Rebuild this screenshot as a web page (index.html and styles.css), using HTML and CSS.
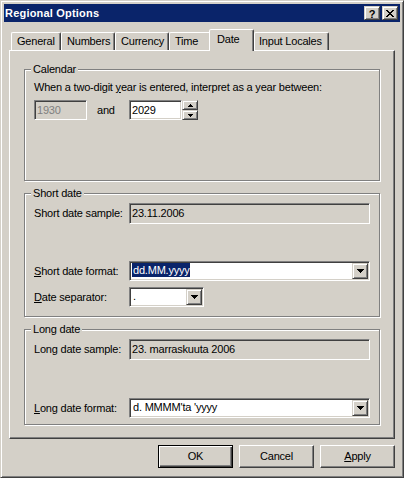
FILE: index.html
```html
<!DOCTYPE html>
<html>
<head>
<meta charset="utf-8">
<title>Regional Options</title>
<link rel="stylesheet" href="styles.css">
</head>
<body>
<div class="window">
  <div class="titlebar">
    <span class="title">Regional Options</span>
    <div class="tbtns">
      <span class="tbtn help">?</span>
      <span class="tbtn close"><svg width="8" height="7" viewBox="0 0 8 7" shape-rendering="crispEdges"><path d="M0 0h2v1H0z M6 0h2v1H6z M1 1h2v1H1z M5 1h2v1H5z M2 2h4v1H2z M3 3h2v1H3z M2 4h4v1H2z M1 5h2v1H1z M5 5h2v1H5z M0 6h2v1H0z M6 6h2v1H6z" fill="#000"/></svg></span>
    </div>
  </div>

  <div class="tabctl">
    <div class="tabs">
      <div class="tab t-general">General</div>
      <div class="tab t-numbers">Numbers</div>
      <div class="tab t-currency">Currency</div>
      <div class="tab t-time">Time</div>
      <div class="tab sel t-date">Date</div>
      <div class="tab t-input">Input Locales</div>
    </div>
    <div class="panel">
      <div class="group g-cal">
        <span class="gtitle">Calendar</span>
        <div class="line">When a two-digit <u>y</u>ear is entered, interpret as a year between:</div>
        <div class="row yr">
          <div class="field edit disabled w-yr">1930</div>
          <span class="and">and</span>
          <div class="field edit w-yr">2029</div>
          <div class="spin">
            <span class="sbtn"><svg width="5" height="3" viewBox="0 0 5 3" shape-rendering="crispEdges"><path d="M2 0h1v1H2z M1 1h3v1H1z M0 2h5v1H0z" fill="#000"/></svg></span>
            <span class="sbtn"><svg width="5" height="3" viewBox="0 0 5 3" shape-rendering="crispEdges"><path d="M0 0h5v1H0z M1 1h3v1H1z M2 2h1v1H2z" fill="#000"/></svg></span>
          </div>
        </div>
      </div>

      <div class="group g-short">
        <span class="gtitle">Short date</span>
        <div class="row">
          <span class="lbl">Short date sample:</span>
          <div class="field sample">23.11.2006</div>
        </div>
        <div class="row r-fmt">
          <span class="lbl"><u>S</u>hort date format:</span>
          <div class="field combo w-wide">
            <span class="ctext"><span class="hl">dd.MM.yyyy</span></span>
            <span class="dd"><svg width="7" height="4" viewBox="0 0 7 4" shape-rendering="crispEdges"><path d="M0 0h7v1H0z M1 1h5v1H1z M2 2h3v1H2z M3 3h1v1H3z" fill="#000"/></svg></span>
          </div>
        </div>
        <div class="row r-sep">
          <span class="lbl"><u>D</u>ate separator:</span>
          <div class="field combo w-sep">
            <span class="ctext plain">.</span>
            <span class="dd"><svg width="7" height="4" viewBox="0 0 7 4" shape-rendering="crispEdges"><path d="M0 0h7v1H0z M1 1h5v1H1z M2 2h3v1H2z M3 3h1v1H3z" fill="#000"/></svg></span>
          </div>
        </div>
      </div>

      <div class="group g-long">
        <span class="gtitle">Long date</span>
        <div class="row">
          <span class="lbl">Long date sample:</span>
          <div class="field sample">23. marraskuuta 2006</div>
        </div>
        <div class="row r-lfmt">
          <span class="lbl"><u>L</u>ong date format:</span>
          <div class="field combo w-wide">
            <span class="ctext plain">d. MMMM'ta 'yyyy</span>
            <span class="dd"><svg width="7" height="4" viewBox="0 0 7 4" shape-rendering="crispEdges"><path d="M0 0h7v1H0z M1 1h5v1H1z M2 2h3v1H2z M3 3h1v1H3z" fill="#000"/></svg></span>
          </div>
        </div>
      </div>
    </div>
  </div>

  <div class="buttons">
    <div class="btn def">OK</div>
    <div class="btn">Cancel</div>
    <div class="btn"><span><u>A</u>pply</span></div>
  </div>
</div>
</body>
</html>
```

FILE: styles.css
```css
* { box-sizing: border-box; }
html, body { margin: 0; padding: 0; }
body {
  background: #d4d0c8;
  font-family: "Liberation Sans", Arial, sans-serif;
  font-size: 11px;
  letter-spacing: -0.2px;
  color: #000;
}
u { text-decoration-thickness: 1px; text-underline-offset: 1px; }

.window {
  width: 404px;
  height: 478px;
  border: 1px solid;
  border-color: #d4d0c8 #404040 #404040 #d4d0c8;
  box-shadow: inset 1px 1px #fff, inset -1px -1px #808080;
  padding: 3px;
  background: #d4d0c8;
  display: flex;
  flex-direction: column;
}

/* title bar */
.titlebar {
  height: 18px;
  background: #0a246a;
  display: flex;
  align-items: center;
  padding: 0 2px 0 1px;
}
.title {
  flex: 1;
  color: #fff;
  font-weight: bold;
  line-height: 18px;
  letter-spacing: 0.2px;
}
.tbtns { display: flex; gap: 2px; }
.tbtn {
  width: 16px;
  height: 14px;
  background: #d4d0c8;
  border: 1px solid;
  border-color: #d4d0c8 #404040 #404040 #d4d0c8;
  box-shadow: inset 1px 1px #fff, inset -1px -1px #808080;
  display: flex;
  align-items: center;
  justify-content: center;
}
.tbtn.help {
  font-weight: bold;
  font-size: 11px;
  line-height: 12px;
  letter-spacing: 0;
  padding-top: 1px;
}
.tbtn.close svg { display: block; margin-top: 0; }

/* tabs */
.tabctl { margin: 7px 0 0 5px; width: 386px; }
.tabs {
  height: 21px;
  display: flex;
  align-items: flex-end;
  padding-left: 2px;
}
.tab {
  height: 18px;
  border: 1px solid;
  border-bottom: 0;
  border-color: #fff #404040 transparent #fff;
  box-shadow: inset -1px 0 #808080;
  border-radius: 2px 2px 0 0;
  line-height: 16px;
  padding-left: 5px;
  white-space: nowrap;
}
.t-general { width: 50px; }
.t-numbers { width: 54px; }
.t-currency { width: 54px; }
.t-time { width: 40px; border-right: 0; box-shadow: none; border-radius: 2px 0 0 0; }
.t-date { width: 45px; padding-left: 7px; }
.t-input { width: 75px; padding-left: 4px; }
.tab.sel {
  height: 22px;
  margin-bottom: -1px;
  padding-top: 1px;
  position: relative;
  z-index: 1;
  background: #d4d0c8;
}

.panel {
  height: 389px;
  border: 1px solid;
  border-color: #fff #404040 #404040 #fff;
  box-shadow: inset -1px -1px #808080;
  padding-top: 18px;
}

/* group boxes */
.group {
  position: relative;
  width: 356px;
  margin-left: 14px;
  border: 1px solid #808080;
  box-shadow: inset 1px 1px #fff, 1px 1px #fff;
  padding-left: 9px;
}
.g-cal { height: 112px; padding-top: 11px; }
.g-short { height: 124px; padding-top: 9px; margin-top: 12px; }
.g-long { height: 96px; padding-top: 9px; margin-top: 12px; }
.gtitle {
  position: absolute;
  top: -7px;
  left: 6px;
  padding: 0 2px;
  line-height: 13px;
  background: #d4d0c8;
}
.line { line-height: 13px; white-space: nowrap; }

.row { display: flex; align-items: center; }
.yr { margin-top: 6px; }
.r-fmt { margin-top: 37px; }
.r-sep { margin-top: 6px; }
.r-lfmt { margin-top: 38px; }
.lbl { width: 95px; line-height: 13px; white-space: nowrap; }
.and { width: 42px; padding-left: 10px; line-height: 13px; }

/* sunken fields */
.field {
  border: 1px solid;
  border-color: #808080 #fff #fff #808080;
  box-shadow: inset 1px 1px #404040, inset -1px -1px #d4d0c8;
  background: #fff;
  white-space: nowrap;
}
.edit {
  height: 20px;
  line-height: 18px;
  padding-left: 2px;
}
.w-yr { width: 53px; }
.edit.disabled { background: #d4d0c8; color: #808080; }
.sample {
  width: 241px;
  height: 21px;
  background: #d4d0c8;
  padding: 3px 0 0 2px;
  line-height: 13px;
}
.combo {
  height: 20px;
  display: flex;
  padding: 1px;
}
.w-wide { width: 241px; }
.w-sep { width: 75px; }
.ctext { flex: 1; display: flex; align-items: flex-start; padding-left: 1px; }
.ctext.plain { padding-left: 2px; line-height: 14px; }
.hl {
  background: #0a246a;
  color: #fff;
  line-height: 14px;
  padding: 0 0 0 1px;
}
.dd {
  width: 16px;
  height: 16px;
  background: #d4d0c8;
  border: 1px solid;
  border-color: #d4d0c8 #404040 #404040 #d4d0c8;
  box-shadow: inset 1px 1px #fff, inset -1px -1px #808080;
  display: flex;
  align-items: center;
  justify-content: center;
}
.dd svg { display: block; }

/* spinner */
.spin {
  width: 16px;
  height: 20px;
  display: flex;
  flex-direction: column;
}
.sbtn {
  height: 10px;
  background: #d4d0c8;
  border: 1px solid;
  border-color: #d4d0c8 #404040 #404040 #d4d0c8;
  box-shadow: inset 1px 1px #fff, inset -1px -1px #808080;
  display: flex;
  align-items: center;
  justify-content: center;
}
.sbtn svg { display: block; }

/* buttons */
.buttons {
  display: flex;
  justify-content: flex-end;
  gap: 6px;
  margin: 6px 0 0 5px;
  width: 386px;
}
.btn {
  width: 75px;
  height: 23px;
  border: 1px solid;
  border-color: #fff #404040 #404040 #fff;
  box-shadow: inset -1px -1px #808080;
  display: flex;
  align-items: center;
  justify-content: center;
  line-height: 13px;
}
.btn.def {
  border-color: #000;
  box-shadow: inset 1px 1px #fff, inset -1px -1px #404040, inset -2px -2px #808080;
}
```
